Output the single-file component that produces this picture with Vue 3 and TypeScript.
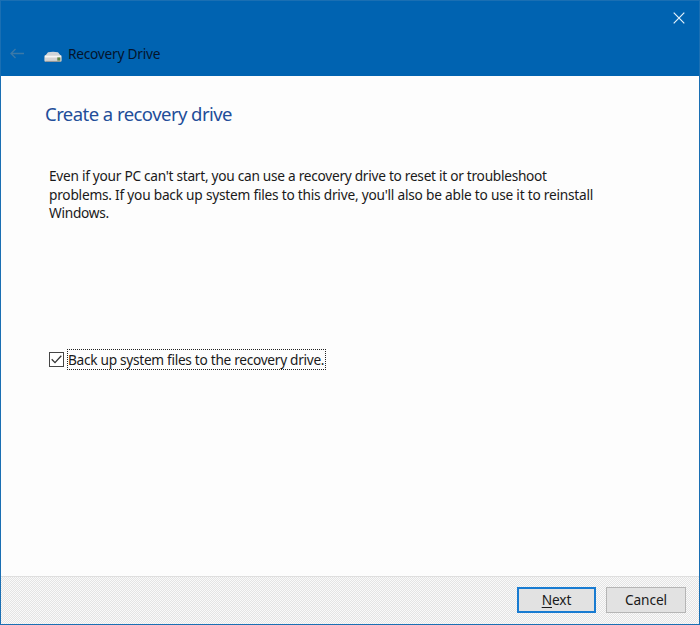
<script setup lang="ts">
import { ref } from 'vue'

const backUpFiles = ref<boolean>(true)
const description: string[] = [
  "Even if your PC can't start, you can use a recovery drive to reset it or troubleshoot",
  "problems. If you back up system files to this drive, you'll also be able to use it to reinstall",
  'Windows.',
]
</script>

<template>
  <div class="window">
    <header class="titlebar">
      <div class="controls">
        <button class="close" aria-label="Close">
          <svg width="12" height="12" viewBox="0 0 12 12"><path d="M.7.7 11.3 11.3M11.3.7.7 11.3" /></svg>
        </button>
      </div>
      <div class="caption">
        <svg class="back" width="14" height="12" viewBox="0 0 14 12"><path d="M14 6.500H1M5.500 2 1 6.500 5.500 11" /></svg>
        <svg class="drive" width="18" height="12" viewBox="0 0 18 12">
          <path d="M4 1.200Q9 .5 14 1.200L17 5H1z" fill="#cfd4d8" />
          <path d="M.4 5.200Q.4 4.200 1.400 4.200h15.200q1 0 1 1v4.400q0 1.200-1.200 1.200H1.600q-1.200 0-1.200-1.200z" fill="#d4d4d4" />
          <path d="M1 5.600h16" stroke="#f6f6f4" stroke-width="1.800" />
          <path d="M1.400 10.400h15.200" stroke="#8f8c86" stroke-width=".8" />
          <rect x="13.300" y="6.400" width="3" height="3.200" fill="#5e8748" />
        </svg>
        <span class="name">Recovery Drive</span>
      </div>
    </header>
    <main class="content">
      <h1>Create a recovery drive</h1>
      <p class="description">
        <span v-for="(line, i) in description" :key="i" :class="'line-' + i">{{ line }}</span>
      </p>
      <label class="option">
        <input v-model="backUpFiles" type="checkbox" />
        <span class="box">
          <svg v-if="backUpFiles" width="13" height="13" viewBox="0 0 13 13"><path d="M1.700 6.300 5 9.600 11.300 2.800" /></svg>
        </span>
        <span class="focus">Back up system files to the recovery drive.</span>
      </label>
    </main>
    <footer class="actions">
      <button class="button primary"><span><u>N</u>ext</span></button>
      <button class="button"><span>Cancel</span></button>
    </footer>
  </div>
</template>

<style>
body { margin: 0; }
</style>

<style scoped>
.window {
  box-sizing: border-box;
  width: 700px;
  height: 625px;
  display: flex;
  flex-direction: column;
  border: 1px solid #1a6fb3;
  background: #fdfdfd;
  color: #1a1a1a;
  font: 13.7px/19px "Noto Sans", "Open Sans", sans-serif;
}
.titlebar { height: 75px; flex: none; background: #0063b1; }
.controls { height: 35px; display: flex; justify-content: flex-end; }
.close { width: 40px; height: 33px; padding: 0; border: 0; background: none; display: flex; align-items: center; justify-content: center; }
.close path { stroke: #e5f2fb; stroke-width: 1.2; fill: none; }
.caption { height: 34px; display: flex; align-items: center; padding-left: 9px; color: #04142c; }
.back path { stroke: #3b79a8; stroke-width: 1.3; fill: none; }
.drive { margin: 7px 6px 0 20px; }
.name { white-space: nowrap; letter-spacing: -0.24px; }
.content { flex: 1; padding: 25px 44px 0; }
h1 { margin: 0; font-size: 18.5px; line-height: 25px; font-weight: 400; color: #224d99; letter-spacing: -0.55px; white-space: nowrap; }
.description { margin: 40px 0 0 4px; display: flex; flex-direction: column; align-items: flex-start; white-space: nowrap; letter-spacing: -0.28px; }
.line-1 { letter-spacing: -0.224px; }
.line-2 { line-height: 18px; }
.option { display: flex; align-items: center; margin: 127px 0 0 4px; }
.option input { appearance: none; width: 0; height: 0; margin: 0; }
.box { box-sizing: border-box; width: 15px; height: 15px; border: 1px solid #454545; background: #fff; display: flex; }
.box path { stroke: #333; stroke-width: 1.300; fill: none; }
.focus { box-sizing: border-box; width: 259px; height: 21px; border: 1px dotted #222; margin-left: 3px; white-space: nowrap; letter-spacing: -0.3px; }
.actions {
  flex: none;
  box-sizing: border-box;
  height: 48px;
  border-top: 1px solid #dfdfdf;
  padding: 10px 13px 0 0;
  display: flex;
  justify-content: flex-end;
  gap: 10px;
  background: repeating-conic-gradient(#e4e4e4 0 25%, #fafafa 0 50%) 0 0 / 2px 2px;
}
.button {
  box-sizing: border-box;
  width: 80px;
  height: 26px;
  padding: 0;
  border: 1px solid #b5b5b5;
  background: #e2e2e2;
  color: #1a1a1a;
  font: inherit;
  line-height: 20px;
  letter-spacing: -0.1px;
}
.primary { width: 79px; border: 2px solid #187bd1; }
u { text-underline-offset: 2px; }
</style>
